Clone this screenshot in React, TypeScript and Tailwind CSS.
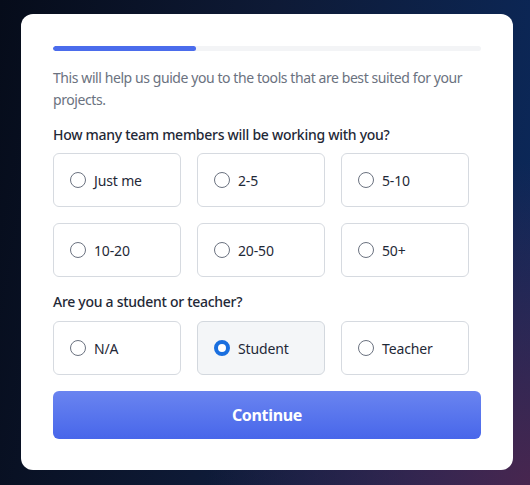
import React, { useState } from 'react';

const TEAM_SIZES = ['Just me', '2-5', '5-10', '10-20', '20-50', '50+'];
const ROLES = ['N/A', 'Student', 'Teacher'];

function Radio({ checked }: { checked: boolean }) {
  return checked ? (
    <span className="w-4 h-4 rounded-full border-[4px] border-[#1a6fdf] bg-white shrink-0" />
  ) : (
    <span className="w-4 h-4 rounded-full border-[1.5px] border-[#6b7280] bg-white shrink-0" />
  );
}

function Option({ label, checked, onClick }: { label: string; checked: boolean; onClick: () => void }) {
  return (
    <button
      onClick={onClick}
      className={`h-[54px] flex items-center gap-2 px-4 border rounded-md text-left text-[14px] tracking-[-0.01em] text-[#1f2937] ${
        checked ? 'bg-[#f4f6f8] border-[#d3d8de]' : 'bg-white border-[#d6dae0]'
      }`}
    >
      <Radio checked={checked} />
      <span>{label}</span>
    </button>
  );
}

export default function App() {
  const [team, setTeam] = useState<string | null>(null);
  const [role, setRole] = useState<string>('Student');

  return (
    <div
      className="w-[530px] h-[485px] pt-[14px] pl-[21px] overflow-hidden bg-[radial-gradient(circle_at_100%_100%,#48264f_0%,rgba(72,38,79,0)_45%),linear-gradient(100deg,#060c1a_0%,#0e1a36_45%,#0b2a5e_100%)]"
      style={{ fontFamily: '"Noto Sans", "Open Sans", sans-serif' }}
    >
      <div className="w-[492px] h-[456px] bg-white rounded-[12px] px-8 pt-8">
        {/* Progress */}
        <div className="h-[5px] w-full bg-[#f3f4f6] rounded-full overflow-hidden">
          <div className="h-full w-1/3 bg-[#4b6cec] rounded-full" />
        </div>

        <p className="mt-4 text-[14px] leading-[22px] tracking-[-0.03em] text-[#6b7280]">
          This will help us guide you to the tools that are best suited for your projects.
        </p>

        <div className="mt-[14px] text-[14px] leading-5 font-medium tracking-[-0.02em] text-[#1f2937]">
          How many team members will be working with you?
        </div>
        <div className="mt-2 grid grid-cols-[repeat(3,128px)] gap-4">
          {TEAM_SIZES.map((t) => (
            <Option key={t} label={t} checked={team === t} onClick={() => setTeam(t)} />
          ))}
        </div>

        <div className="mt-[15px] text-[14px] leading-5 font-medium tracking-[-0.02em] text-[#1f2937]">
          Are you a student or teacher?
        </div>
        <div className="mt-[9px] grid grid-cols-[repeat(3,128px)] gap-4">
          {ROLES.map((r) => (
            <Option key={r} label={r} checked={role === r} onClick={() => setRole(r)} />
          ))}
        </div>

        <button className="mt-4 w-full h-12 rounded-md bg-gradient-to-b from-[#6a84f0] to-[#4866ea] text-white font-bold text-[16px] tracking-[-0.02em]">
          Continue
        </button>
      </div>
    </div>
  );
}
